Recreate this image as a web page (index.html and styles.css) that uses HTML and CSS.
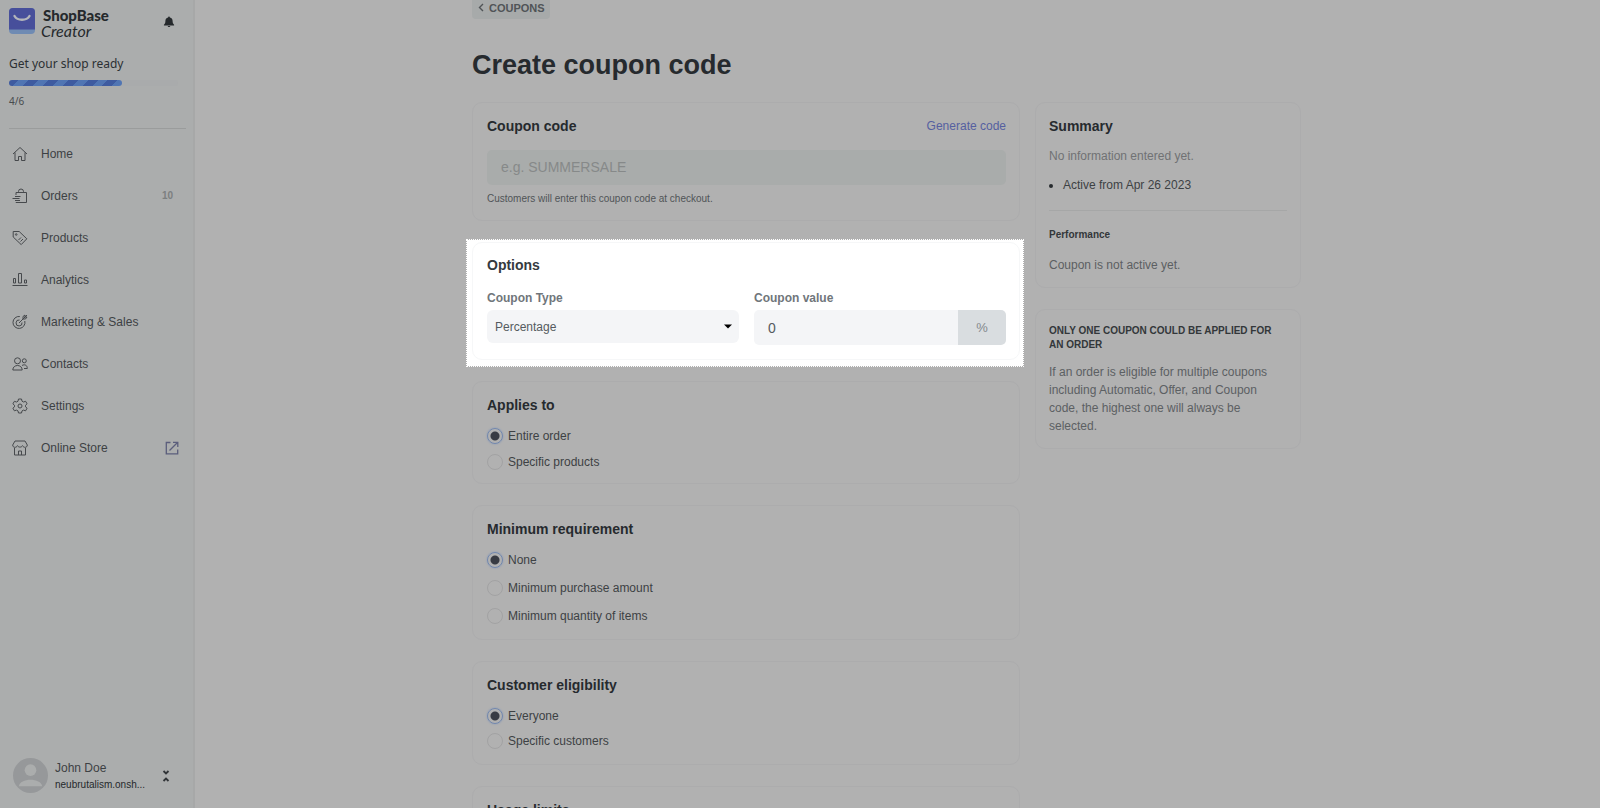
FILE: index.html
```html
<!DOCTYPE html>
<html lang="en">
<head>
<meta charset="utf-8">
<title>Create coupon code</title>
<link rel="stylesheet" href="styles.css">
</head>
<body>
<div class="app">
  <aside class="sidebar">
    <div class="brand">
      <svg class="brand-mark" viewBox="0 0 26 26" aria-hidden="true">
        <rect width="26" height="26" rx="4" fill="#6f8bb3"/>
        <path d="M4 0h18a4 4 0 0 1 4 4v17.500H0V4a4 4 0 0 1 4-4z" fill="#474f9b"/>
        <path d="M5.500 8c3 5 12 5 15 0" fill="none" stroke="#b4b6bb" stroke-width="2.400" stroke-linecap="round"/>
      </svg>
      <div class="brand-name"><span class="brand-top">ShopBase</span><span class="brand-script">Creator</span></div>
      <button class="bell" aria-label="Notifications">
        <svg viewBox="0 0 12 12" width="12" height="12"><path d="M6 .5c.6 0 .9.400.9.900C8.800 1.800 9.600 3.200 9.600 5c0 2 .5 2.900 1.500 3.700v.8H.9v-.8C1.900 7.900 2.400 7 2.400 5c0-1.800.8-3.200 2.700-3.600 0-.5.3-.9.9-.9zM4.700 10.100h2.600c-.2 1.300-2.400 1.300-2.600 0z" fill="#25292c"/></svg>
      </button>
    </div>
    <div class="ready">
      <p class="ready-title">Get your shop ready</p>
      <div class="track"><div class="fill"></div></div>
      <p class="ready-count">4/6</p>
    </div>
    <nav class="nav">
      <a href="#"><svg viewBox="0 0 16 16"><path d="M1 8 8 1.500 15 8M3 6.500v8h3.500v-4h3v4H13v-8"/></svg>Home</a>
      <a href="#"><svg viewBox="0 0 16 16"><path d="M4 7V4.500h10.500v10H4V14M6.500 4.500V3.500a2.500 2.500 0 0 1 5 0v1M3 8.500h5.500M.5 10.500h7M3 12.500h5"/></svg>Orders<span class="count">10</span></a>
      <a href="#"><svg viewBox="0 0 16 16"><path d="M1.200 1.500h6l7.600 7.300-5.600 5.800L1.200 7z"/><circle cx="4.200" cy="4.500" r=".8"/><path d="M6.500 10 9 7.500M8.500 11.500 11 9"/></svg>Products</a>
      <a href="#"><svg viewBox="0 0 16 16"><path d="M1.500 6.500h2v4.500h-2zM6.500 1.500h3v9.500h-3zM12.500 8h2v3h-2zM.5 13.500h15"/></svg>Analytics</a>
      <a href="#"><svg viewBox="0 0 16 16"><path d="M12.800 7a6 6 0 1 1-5-4.500M10 8.500A3 3 0 1 1 7.500 6M7 9l4-4M11 5V2.500L13 1v2h2l-1.500 2zM11 5l4-4"/></svg>Marketing &amp; Sales</a>
      <a href="#"><svg viewBox="0 0 16 16"><circle cx="5.500" cy="4.800" r="3"/><circle cx="12.300" cy="4.800" r="2"/><path d="M.8 14c0-6 9.400-6 9.400 0zM10 9.500c2.500-1.500 5.300-.5 5.300 3H12"/></svg>Contacts</a>
      <a href="#"><svg viewBox="0 0 16 16"><path d="M6.500 1h3l.5 2.200 1.500.8 2.100-.7 1.500 2.500L13.500 7.300v1.500l1.600 1.400-1.500 2.600-2.100-.7-1.500.8-.5 2.100h-3L6 12.900l-1.500-.8-2.100.7-1.500-2.600 1.600-1.400V7.300L.9 5.800l1.500-2.500 2.100.7L6 3.200z"/><circle cx="8" cy="8" r="2"/></svg>Settings</a>
      <a href="#"><svg viewBox="0 0 16 16"><path d="M3 1h10l2.300 4c0 3-3.700 3-4.800.6-.8 2-4.200 2-5 0C4.400 8 .7 8 .7 5zM2.500 8v7h11V8M6.500 15v-4h3v4"/></svg>Online Store
        <svg class="external" viewBox="0 0 14 14"><path d="M5.500 1.500H1.300v11.400h11.400V8.500M8 1.300h4.800v4.800M12.500 1.500 4.500 9.500"/></svg></a>
    </nav>
    <button class="account">
      <svg class="avatar" viewBox="0 0 36 36" aria-hidden="true"><circle cx="18" cy="18" r="18" fill="#96989a"/><circle cx="18" cy="12.500" r="6" fill="#abadad"/><path d="M6 29c1-9 23-9 24 0z" fill="#abadad"/></svg>
      <span class="account-text"><span class="account-name">John Doe</span><span class="account-shop">neubrutalism.onsh...</span></span>
      <svg class="sort" viewBox="0 0 8 12" aria-hidden="true"><path d="M1.500 1 4 3.500 6.500 1M1.500 11 4 8.500 6.500 11" fill="none" stroke="#303437" stroke-width="1.800"/></svg>
    </button>
  </aside>

  <main class="main">
    <div class="page">
      <a class="back" href="#"><svg viewBox="0 0 6 9" width="6" height="9"><path d="M5 1 1.500 4.500 5 8" fill="none" stroke="#505457" stroke-width="1.400"/></svg>COUPONS</a>
      <h1>Create coupon code</h1>
      <div class="columns">
        <form class="forms">
          <section class="card">
            <div class="card-head"><h2><label for="code">Coupon code</label></h2><a class="generate" href="#">Generate code</a></div>
            <input class="code-input" id="code" type="text" placeholder="e.g. SUMMERSALE">
            <p class="help">Customers will enter this coupon code at checkout.</p>
          </section>

          <div class="spotlight">
            <section class="card card-lit">
              <h2>Options</h2>
              <div class="fields">
                <div class="field">
                  <label for="type">Coupon Type</label>
                  <div class="select"><select id="type"><option>Percentage</option></select><svg viewBox="0 0 8 5" width="8" height="5" aria-hidden="true"><path d="M0 .5h8L4 4.500z"/></svg></div>
                </div>
                <div class="field">
                  <label for="value">Coupon value</label>
                  <div class="value"><input id="value" type="text" value="0"><span>%</span></div>
                </div>
              </div>
            </section>
          </div>

          <section class="card">
            <h2>Applies to</h2>
            <div class="choices">
              <label><input type="radio" name="applies" checked>Entire order</label>
              <label><input type="radio" name="applies">Specific products</label>
            </div>
          </section>
          <section class="card">
            <h2>Minimum requirement</h2>
            <div class="choices choices-loose">
              <label><input type="radio" name="minimum" checked>None</label>
              <label><input type="radio" name="minimum">Minimum purchase amount</label>
              <label><input type="radio" name="minimum">Minimum quantity of items</label>
            </div>
          </section>
          <section class="card">
            <h2>Customer eligibility</h2>
            <div class="choices choices-tight">
              <label><input type="radio" name="customers" checked>Everyone</label>
              <label><input type="radio" name="customers">Specific customers</label>
            </div>
          </section>
          <section class="card">
            <h2>Usage limits</h2>
          </section>
        </form>

        <aside class="info">
          <section class="card info-card">
            <h2>Summary</h2>
            <p class="faint">No information entered yet.</p>
            <ul><li>Active from Apr 26 2023</li></ul>
            <hr>
            <h3>Performance</h3>
            <p class="status">Coupon is not active yet.</p>
          </section>
          <section class="card info-card notice">
            <h3>ONLY ONE COUPON COULD BE APPLIED FOR AN ORDER</h3>
            <p class="note">If an order is eligible for multiple coupons including Automatic, Offer, and Coupon code, the highest one will always be selected.</p>
          </section>
        </aside>
      </div>
    </div>
  </main>
</div>
</body>
</html>
```
FILE: styles.css
```css
* { box-sizing: border-box; }
body { margin: 0; background: #b1b1b1; color: #3d4144; font: 12px/18px "Liberation Sans", Arial, sans-serif; }
h1, h2, h3, p, ul { margin: 0; padding: 0; }
button { border: 0; padding: 0; background: none; font: inherit; color: inherit; text-align: left; }
a { color: inherit; text-decoration: none; }
input, select { font: inherit; margin: 0; border: 0; color: inherit; }

.app { display: flex; height: 100vh; overflow: hidden; }

/* Sidebar */
.sidebar { flex: 0 0 195px; display: flex; flex-direction: column; padding: 8px 7px 15px 9px; background: #abadad; border-right: 2px solid #a7a8a8; }
.brand { display: flex; align-items: flex-start; gap: 6px; height: 32px; }
.brand-mark { width: 26px; height: 26px; }
.brand-name { display: flex; flex-direction: column; color: #25292c; }
.brand-top { font: 900 15px/15px Lato, sans-serif; padding-left: 2px; }
.brand-script { font: italic 400 16px/16px Lato, cursive; }
.bell { display: flex; margin: 8px 11px 0 auto; }
.ready { padding: 14px 8px 19px 0; border-bottom: 1px solid #9a9c9c; }
.ready-title { font: 12px/20px "Noto Sans", sans-serif; color: #2c3033; }
.track { margin-top: 6px; height: 6px; border-radius: 3px; background: #a9abac; }
.fill { width: 67%; height: 6px; border-radius: 3px; background: repeating-linear-gradient(135deg, #3e5ba0 0 7px, #5075b3 7px 14px); }
.ready-count { margin-top: 7px; font: 10px/16px "Noto Sans", sans-serif; color: #484c4f; }
.nav { margin-top: 4px; }
.nav a { display: flex; align-items: center; padding: 12px 7px 12px 3px; }
.nav svg { width: 16px; height: 16px; margin-right: 13px; fill: none; stroke: #46494c; stroke-width: 1; }
.nav .external { width: 14px; height: 14px; margin: 0 0 0 auto; stroke: #5b5e7c; stroke-width: 1.3; }
.count { margin-left: auto; padding-right: 6px; font: bold 10px/18px "Liberation Sans", sans-serif; color: #7c7f80; }
.account { display: flex; align-items: center; margin-top: auto; padding-left: 4px; }
.avatar { width: 35px; height: 35px; }
.account-text { display: flex; flex-direction: column; margin-left: 7px; }
.account-name { line-height: 18px; }
.account-shop { font-size: 10px; line-height: 16px; color: #25292c; }
.sort { width: 8px; height: 12px; margin: 0 16px 0 auto; }

/* Page */
.main { flex: 1; overflow: hidden; padding-right: 22px; }
.page { max-width: 829px; margin: -5px auto 0; }
.back { display: inline-flex; align-items: center; gap: 5px; height: 24px; padding: 2px 5px 0 6px; border-radius: 4px; background: #a7aaaa; color: #505457; font-weight: bold; font-size: 11px; }
.back svg { margin-bottom: 2px; }
h1 { margin: 29px 0 20px; font-size: 27px; line-height: 34px; color: #262a2e; }
.columns { display: grid; grid-template-columns: minmax(0, 1fr) 266px; gap: 15px; align-items: start; }
.forms, .info { display: flex; flex-direction: column; gap: 21px; }
.card { padding: 13px 13px 13px 14px; border: 1px solid #acacad; border-radius: 10px; }
h2 { font-size: 14px; line-height: 20px; color: #262a2e; }
.card-head { display: flex; justify-content: space-between; align-items: center; }
.generate { color: #5560a0; }
.code-input { display: block; width: 100%; height: 35px; margin-top: 14px; padding: 0 14px 2px; border-radius: 5px; background: #a9acab; font-size: 14px; }
.code-input::placeholder { color: #868989; opacity: 1; }
.help { margin: 7px 0 1px; font-size: 10px; line-height: 14px; color: #505457; }

.spotlight { margin: -3px -4px -7px -6px; padding: 2px 3px 6px 5px; border: 1px dotted #fff; background: #fff padding-box; }
.card-lit { border-color: #f6f7f8; color: #555b60; padding-top: 12px; padding-bottom: 14px; }
.card-lit h2 { color: #343a40; }
.fields { display: grid; grid-template-columns: repeat(2, minmax(0, 1fr)); gap: 15px; margin-top: 16px; }
.field { display: flex; flex-direction: column; gap: 5px; }
.field label { font-weight: bold; line-height: 14px; color: #70767b; }
.select { display: grid; align-items: center; }
.select select, .select svg { grid-area: 1 / 1; }
.select select { appearance: none; width: 100%; height: 33px; padding: 0 8px; border-radius: 6px; background: #f4f5f7; }
.select svg { justify-self: end; margin-right: 7px; pointer-events: none; }
.value { display: flex; height: 35px; border-radius: 5px; overflow: hidden; }
.value input { flex: 1; min-width: 0; padding: 0 14px; background: #f4f5f7; font-size: 14px; }
.value span { flex: 0 0 48px; display: grid; place-items: center; background: #d9dde0; color: #84898d; font-size: 13px; }

.choices { display: grid; gap: 10px; margin-top: 13px; }
.choices-loose { gap: 12px; padding-bottom: 2px; }
.choices-tight { gap: 9px; padding-bottom: 2px; }
.choices label { display: flex; align-items: center; gap: 5px; line-height: 16px; }
.choices input { appearance: none; width: 16px; height: 16px; border: 1px solid #a2a2a3; border-radius: 50%; }
.choices input:checked { border-color: #7187ae; box-shadow: 0 0 2px #8195b8; background: radial-gradient(circle, #383b43 0 4px, transparent 5px); }

.info-card { padding: 13px; }
.info-card p, .info-card ul { margin-top: 11px; }
.info-card ul { padding-left: 14px; }
.info-card li::marker { color: #262a2e; }
.info-card hr { margin: 16px 0 17px; border: 0; border-top: 1px solid #a6a7a7; }
.info-card h3 { font-size: 10px; line-height: 14px; color: #33373a; }
.info-card .faint { color: #707274; }
.info-card .status { margin-top: 14px; color: #5c5f62; }
.info-card .note { color: #5c6063; }
.notice { padding-top: 14px; }
```
